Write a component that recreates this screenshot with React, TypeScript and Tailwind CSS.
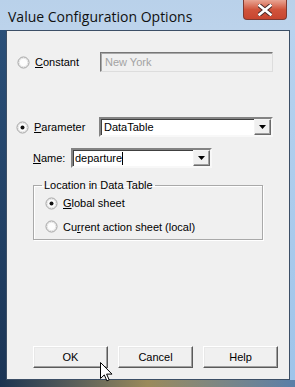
import { FC, ReactNode } from 'react';

const Radio: FC<{ checked?: boolean }> = ({ checked }) => (
  <svg width="13" height="13" viewBox="0 0 13 13" className="shrink-0">
    <circle cx="6.5" cy="6.5" r="5.5" fill="#fdfdfd" stroke="#9c9c9c" strokeWidth="1" />
    <circle cx="6.5" cy="6.5" r="4.3" fill="none" stroke="#e2e2e2" strokeWidth="1" />
    {checked && <circle cx="6.5" cy="6.5" r="2" fill="#111" />}
  </svg>
);

const DropButton: FC = () => (
  <div className="w-[17px] h-full flex items-center justify-center bg-[#f0f0f0] border border-t-[#f4f4f4] border-l-[#f4f4f4] border-b-[#6a6a6a] border-r-[#6a6a6a] shadow-[inset_-1px_-1px_0_#a0a0a0]">
    <svg width="7" height="4" viewBox="0 0 7 4">
      <path d="M0 0h7L3.5 4z" fill="#000" />
    </svg>
  </div>
);

const Button: FC<{ children: ReactNode }> = ({ children }) => (
  <div className="w-[75px] h-[22px] flex items-center justify-center bg-[#f0f0f0] border border-t-white border-l-white border-b-[#5a5a5a] border-r-[#5a5a5a] shadow-[inset_-1px_-1px_0_#a0a0a0,inset_1px_1px_0_#e8e8e8] text-[11px] text-black">
    {children}
  </div>
);

const sunken =
  'border-2 border-t-[#838383] border-l-[#838383] border-b-[#f8f8f8] border-r-[#f8f8f8] shadow-[inset_1px_1px_0_#404040]';

export default function App() {
  return (
    <div
      className="relative w-[295px] h-[387px] overflow-hidden flex flex-col bg-gradient-to-b from-[#b9d1ea] via-[#cfdff1] to-[#a9c6e6]"
      style={{ fontFamily: '"Liberation Sans", Arial, sans-serif' }}
    >
      {/* title bar */}
      <div className="h-[30px] flex items-start justify-between shrink-0">
        <span
          className="pl-[8px] pt-[6px] text-[14px] text-[#101010]"
          style={{ fontFamily: '"Open Sans", "Noto Sans", sans-serif' }}
        >
          Value Configuration Options
        </span>
        <div className="mr-[8px] w-[44px] h-[20px] rounded-b-[4px] border border-t-0 border-[#7e3a32] bg-gradient-to-b from-[#e8a493] via-[#d0543c] to-[#c8462f] flex items-center justify-center">
          <svg width="14" height="12" viewBox="0 0 14 12">
            <path
              d="M1.5 1.5L12.5 10.5M12.5 1.5L1.5 10.5"
              stroke="#4a2a28"
              strokeWidth="4.5"
              strokeLinecap="square"
            />
            <path
              d="M1.5 1.5L12.5 10.5M12.5 1.5L1.5 10.5"
              stroke="#fff"
              strokeWidth="2.6"
              strokeLinecap="square"
            />
          </svg>
        </div>
      </div>

      {/* frame + client */}
      <div className="flex flex-1">
        <div className="w-[6px] bg-gradient-to-b from-[#2a4f78] to-[#1b3556]" />
        <div className="flex-1 flex flex-col border border-[#3c4f66] bg-[#f0f0f0] text-[11px] text-black">
          {/* Constant */}
          <div className="mt-[21px] flex items-center h-[20px]">
            <div className="ml-[10px] flex items-center gap-[5px] w-[83px]">
              <Radio />
              <span>
                <span className="underline">C</span>onstant
              </span>
            </div>
            <div className="w-[173px] h-[20px] border border-t-[#777] border-l-[#777] border-b-[#ddd] border-r-[#ddd] shadow-[inset_1px_1px_0_#a8a8a8] bg-[#f0f0f0] flex items-center pl-[4px] text-[#a3a3a3]">
              New York
            </div>
          </div>

          {/* Parameter */}
          <div className="mt-[45px] flex items-center h-[20px]">
            <div className="ml-[9px] flex items-center gap-[5px] w-[83px]">
              <Radio checked />
              <span>
                <span className="underline">P</span>arameter
              </span>
            </div>
            <div className={`w-[174px] h-[20px] ${sunken} bg-white flex items-center`}>
              <span className="flex-1 pl-[3px]">DataTable</span>
              <DropButton />
            </div>
          </div>

          {/* Name */}
          <div className="mt-[11px] flex items-center h-[20px]">
            <span className="ml-[26px] w-[38px]">
              <span className="underline">N</span>ame:
            </span>
            <div className={`w-[141px] h-[20px] ${sunken} bg-white flex items-center`}>
              <span className="flex-1 pl-[2px] flex items-center">
                departure<span className="inline-block w-px h-[13px] bg-black" />
              </span>
              <DropButton />
            </div>
          </div>

          {/* Group */}
          <fieldset className="mt-[11px] ml-[26px] w-[230px] h-[61px] border border-[#a9a9a9] shadow-[1px_1px_0_#fff,inset_1px_1px_0_#fff] px-[11px]">
            <legend className="ml-[-3px] px-[2px] text-[11px] leading-[12px]">Location in Data Table</legend>
            <div className="flex flex-col gap-[7px] mt-[4px]">
              <div className="flex items-center gap-[5px]">
                <Radio checked />
                <span>
                  <span className="underline">G</span>lobal sheet
                </span>
              </div>
              <div className="flex items-center gap-[5px]">
                <Radio />
                <span>
                  Cu<span className="underline">r</span>rent action sheet (local)
                </span>
              </div>
            </div>
          </fieldset>

          {/* Buttons */}
          <div className="mt-auto mb-[11px] ml-[26px] flex gap-[10px]">
            <Button>OK</Button>
            <Button>Cancel</Button>
            <Button>Help</Button>
          </div>
        </div>
        <div className="w-[5px] bg-gradient-to-b from-[#b8d3ef] to-[#9fc4ea]" />
      </div>

      {/* bottom frame */}
      <div className="h-[7px] shrink-0 bg-gradient-to-r from-[#1c3350] via-[#9a8a5a] to-[#5a7fa8]" />

      {/* mouse pointer */}
      <svg
        className="absolute left-[100px] top-[362px]"
        width="13"
        height="20"
        viewBox="0 0 13 20"
      >
        <path
          d="M0.5 0.5v16l3.8-3.6 2.6 6 2.3-1-2.6-5.8h5.4z"
          fill="#fff"
          stroke="#000"
          strokeWidth="1"
          strokeLinejoin="round"
        />
      </svg>
    </div>
  );
}
